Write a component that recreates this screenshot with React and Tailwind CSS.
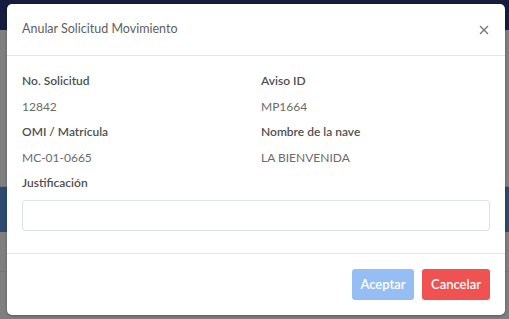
import React from "react";

function Field({ label, value }) {
  return (
    <div>
      <div className="text-[12px] font-semibold text-[#4f4f4f] leading-[16px]">{label}</div>
      <div className="mt-[10px] text-[12px] text-[#6b6b6b] leading-[16px]">{value}</div>
    </div>
  );
}

export default function App() {
  return (
    <div className="relative w-[509px] h-[319px] overflow-hidden bg-[#7f7f7f]" style={{ fontFamily: "Lato, 'Noto Sans', sans-serif" }}>
      <div className="h-[30px] bg-[#151c3f]"></div>
      <div className="h-[157px] border-b border-[#767676]"></div>
      <div className="h-[45px] bg-[#2c4a70]"></div>
      <div className="h-[40px] border-b border-[#6f7a6f]"></div>

      <div className="absolute left-[7px] top-[4px] w-[498px] h-[311px] bg-white rounded-[5px] shadow-[0_1px_3px_rgba(0,0,0,0.3)] flex flex-col">
        <div className="h-[52px] flex items-center justify-between px-[15px] border-b border-[#e5e5e5]">
          <h2 className="text-[12.5px] text-[#606060]">Anular Solicitud Movimiento</h2>
          <button className="text-[#777] mr-[1px]">
            <svg width="10" height="10" viewBox="0 0 10 10" stroke="currentColor" strokeWidth="1.4">
              <path d="M1 1 L9 9 M9 1 L1 9" />
            </svg>
          </button>
        </div>

        <div className="px-[15px] pt-[17px] pb-[22px] border-b border-[#e5e5e5]">
          <div className="flex flex-col gap-[9px]">
            <div className="flex">
              <div className="w-[239px]"><Field label="No. Solicitud" value="12842" /></div>
              <Field label="Aviso ID" value="MP1664" />
            </div>
            <div className="flex">
              <div className="w-[239px]"><Field label="OMI / Matrícula" value="MC-01-0665" /></div>
              <Field label="Nombre de la nave" value="LA BIENVENIDA" />
            </div>
            <div>
              <div className="text-[12px] font-semibold text-[#4f4f4f] leading-[16px]">Justificación</div>
              <input className="mt-[9px] block w-full h-[31px] rounded-[3px] border border-[#dbe3e8] outline-none px-2 text-[12px]" />
            </div>
          </div>
        </div>

        <div className="flex-1 flex items-start justify-end gap-[8px] px-[15px] pt-[15px]">
          <button className="h-[31px] w-[62px] rounded-[3px] bg-[#95bff4] text-white text-[13px] font-semibold">Aceptar</button>
          <button className="h-[31px] w-[68px] rounded-[3px] bg-[#f05252] text-white text-[13px] font-semibold">Cancelar</button>
        </div>
      </div>
    </div>
  );
}
